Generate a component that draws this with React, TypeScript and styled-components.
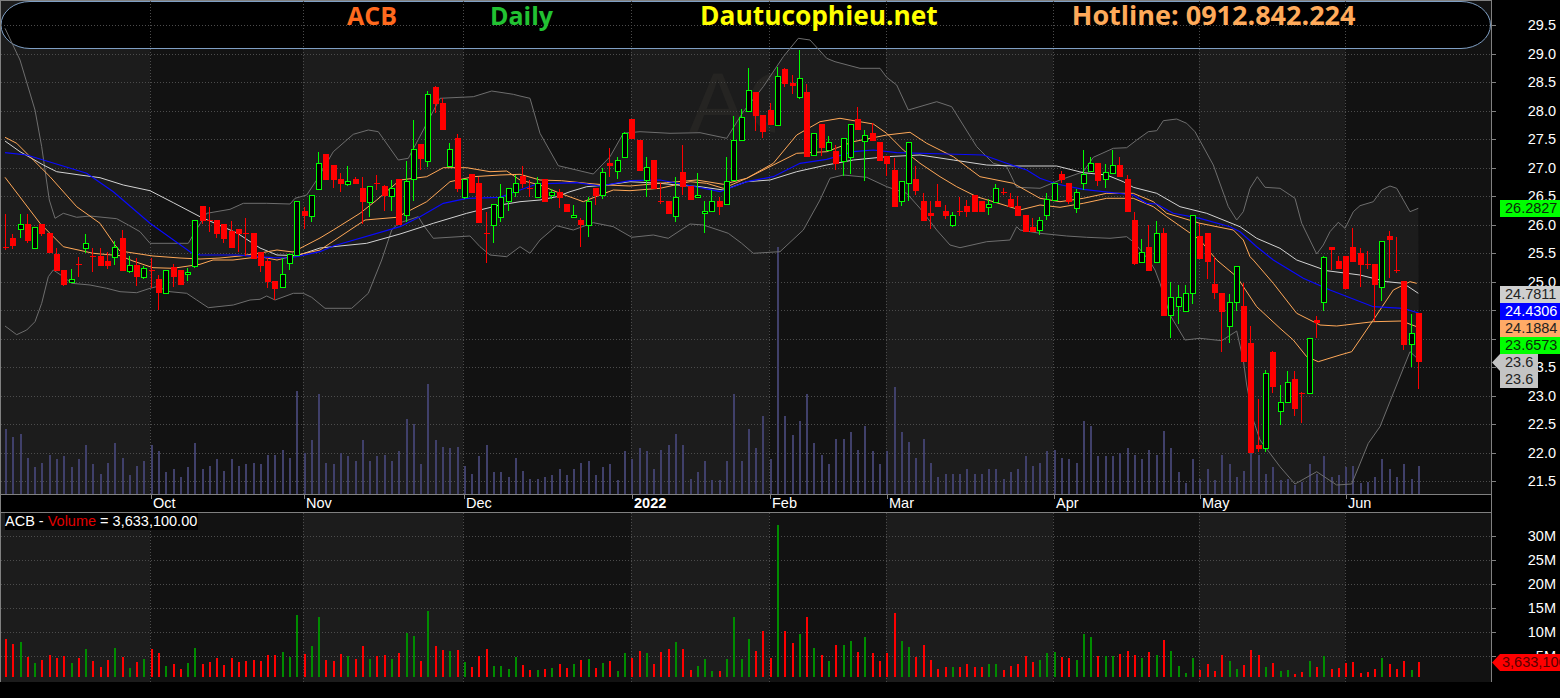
import styled, { createGlobalStyle } from "styled-components";

const GlobalStyle = createGlobalStyle`
    html, body {
        margin: 0;
        background: #000;
    }
`;

const Shell = styled.div`
    position: relative;
    width: 1560px;
    height: 698px;
    background: #000;
    overflow: hidden;
    font-family: "Liberation Sans", Arial, sans-serif;
`;

const PriceRow = styled.div`
    position: relative;
    display: flex;
    height: 494px;
`;

const VolumeRow = styled.div`
    position: relative;
    display: flex;
    height: 169px;
`;

const Plot = styled.div<{ $top?: boolean }>`
    position: relative;
    box-sizing: border-box;
    width: 1492px;
    border-left: 1px solid #808080;
    border-right: 1px solid #808080;
    border-top: ${(props) => (props.$top ? "1px solid #808080" : "0")};
`;

const ChartSvg = styled.svg`
    display: block;
`;

const AxisSvg = styled.svg`
    display: block;
    flex: none;
`;

const AxisText = styled.text`
    font-family: "Liberation Sans", Arial, sans-serif;
    font-size: 14.5px;
    fill: #fff;
`;

const Watermark = styled.text`
    font-family: "Liberation Sans", Arial, sans-serif;
    font-size: 86px;
    fill: #252422;
`;

const Banner = styled.div`
    position: absolute;
    top: 0;
    left: 0;
    display: flex;
    align-items: baseline;
    width: 1480px;
    height: 36px;
    line-height: 28px;
    font-family: "Open Sans", "Noto Sans", sans-serif;
    font-weight: 700;
    white-space: nowrap;
`;

const BannerText = styled.span<{ $color: string; $left: number; $size: number }>`
    flex: none;
    color: ${(props) => props.$color};
    margin-left: ${(props) => props.$left}px;
    font-size: ${(props) => props.$size}px;
`;

const DateStrip = styled.div`
    box-sizing: border-box;
    display: flex;
    width: 1492px;
    height: 19px;
    padding-left: 1px;
    border: 1px solid #808080;
`;

const MonthCell = styled.div<{ $width: number; $bold?: boolean }>`
    position: relative;
    box-sizing: border-box;
    flex: none;
    width: ${(props) => props.$width}px;
    padding-left: 2px;
    color: #fff;
    font-size: 14.5px;
    line-height: 17px;
    font-weight: ${(props) => (props.$bold ? 700 : 400)};

    &::before {
        content: "";
        position: absolute;
        left: 0;
        top: 0;
        width: 1px;
        height: 4px;
        background: #808080;
    }
`;

const SpacerCell = styled.div<{ $width: number }>`
    flex: none;
    width: ${(props) => props.$width}px;
`;

const Legend = styled.div`
    position: absolute;
    top: 0;
    left: 4px;
    padding: 0 1px 0 0;
    height: 17px;
    line-height: 17px;
    background: #000;
    color: #fff;
    font-size: 14.5px;
    white-space: pre;
`;

const LegendAccent = styled.span`
    color: #e00000;
`;

const TagStack = styled.div`
    position: absolute;
    top: 286px;
    left: 1500px;
    display: flex;
    flex-direction: column;
    align-items: flex-start;
`;

const PriceTag = styled.div<{ $bg: string; $fg: string; $narrow?: boolean }>`
    box-sizing: border-box;
    width: ${(props) => (props.$narrow ? 38 : 60)}px;
    height: 17px;
    padding-left: 5px;
    line-height: 17px;
    font-size: 14.5px;
    white-space: nowrap;
    background: ${(props) => props.$bg};
    color: ${(props) => props.$fg};
`;

const PointerTag = styled(PriceTag)`
    width: 46px;
    margin-left: -8px;
    padding-left: 13px;
    clip-path: polygon(0 50%, 8px 0, 100% 0, 100% 100%, 8px 100%);
`;

const CurrentTag = styled(PriceTag)`
    position: absolute;
    top: 200px;
    left: 1500px;
`;

const VolumeTag = styled.div`
    position: absolute;
    top: 141px;
    left: 1492px;
    box-sizing: border-box;
    width: 68px;
    height: 17px;
    padding-left: 10px;
    line-height: 17px;
    font-size: 14.5px;
    white-space: nowrap;
    overflow: hidden;
    background: #ff0000;
    color: #5a0000;
    clip-path: polygon(0 50%, 8px 0, 100% 0, 100% 100%, 8px 100%);
`;

// [high, body top, body bottom, low] in page pixels
const candles: number[][] = [
    [214,247,248,249.5],[234,238,246,249],[214,224,229,238],[214,224,241,243],[227,227,248,249],
    [224,224,234,236],[233,233,253,253],[248,254,271,271],[270,270,285,286],[269,279,282,283],
    [257,264,265,277],[234,243,248,253],[248,256,257,272],[248,256,266,266],[252,261,266,269],
    [241,247,257,265],[230,238,271,271],[256,265,271,273],[258,265,277,286],[266,268,277,279],
    [258,270,271,288],[275,279,293,310],[270,270,293,293],[264,267,277,287],[270,270,285,285],
    [268,272,274,281],[220,220,266,268],[206,206,221,224],[207,220,221,232],[220,220,234,238],
    [224,224,239,243],[221,231,248,248],[229,229,234,252],[218,233,234,256],[233,233,259,259],
    [252,252,266,272],[258,261,282,288],[281,281,289,300],[258,274,287,287],[254,254,263,270],
    [201,201,255,256],[207,211,216,229],[195,195,216,222],[152,163,189,189],[154,154,180,180],
    [165,165,180,188],[173,179,184,192],[166,181,184,186],[177,179,184,184],[177,188,202,224],
    [186,186,202,217],[175,183,184,190],[185,186,196,211],[180,188,196,211],[179,179,225,225],
    [161,181,215,222],[120,149,179,201],[144,144,159,170],[91,94,161,167],[86,87,104,113],
    [98,103,130,130],[143,149,166,166],[134,138,189,192],[179,179,197,199],[174,174,193,193],
    [177,183,223,223],[212,233,234,263],[204,204,225,243],[184,197,217,222],[188,188,201,211],
    [175,183,192,197],[166,176,184,188],[180,188,189,197],[177,183,197,197],[179,179,202,202],
    [189,192,195,199],[189,192,198,208],[204,204,212,212],[205,215,217,217],[218,220,225,247],
    [197,201,225,237],[188,188,196,205],[168,172,195,199],[148,163,166,177],[157,160,171,179],
    [132,133,157,157],[119,119,139,139],[140,140,171,171],[157,167,180,197],[160,160,189,189],
    [183,201,202,204],[201,201,214,214],[177,197,216,222],[145,172,187,195],[186,186,200,200],
    [173,195,197,197],[201,211,213,233],[190,201,211,211],[197,201,207,215],[157,181,204,205],
    [116,140,180,180],[109,117,140,140],[68,90,111,111],[92,92,116,131],[115,115,132,138],
    [103,110,125,125],[67,76,125,125],[68,69,84,87],[75,83,86,94],[50,78,97,99],
    [84,92,157,157],[133,133,155,155],[124,124,148,156],[136,142,150,150],[145,151,164,170],
    [138,138,161,176],[124,124,157,174],[107,119,130,130],[130,135,141,181],[123,133,141,141],
    [142,142,161,161],[156,156,164,176],[158,170,207,207],[181,181,201,206],[142,142,183,201],
    [166,179,191,195],[193,201,221,221],[201,213,216,229],[184,201,207,207],[205,211,216,219],
    [212,215,225,227],[197,211,212,216],[200,206,212,217],[195,195,212,212],[201,201,212,212],
    [199,204,207,215],[184,188,202,202],[188,192,193,195],[193,199,207,207],[196,206,216,216],
    [215,215,232,232],[218,227,232,232],[217,220,230,235],[193,199,215,220],[183,183,200,200],
    [171,174,180,183],[183,183,202,204],[189,192,208,213],[150,174,183,190],[157,163,171,171],
    [163,163,181,186],[164,172,179,188],[150,165,173,173],[157,165,177,177],[175,179,212,212],
    [212,220,264,265],[239,252,262,262],[225,247,271,271],[221,233,262,262],[228,233,316,316],
    [282,297,315,338],[285,297,306,324],[285,293,311,311],[215,215,293,304],[224,236,259,259],
    [233,233,262,279],[257,284,293,299],[293,293,312,352],[294,302,326,343],[266,266,302,311],
    [283,306,362,362],[326,343,453,453],[399,445,449,452],[370,373,448,452],[351,352,387,393],
    [385,402,411,425],[371,382,402,402],[371,379,409,416],[392,393,394,423],[338,338,393,393],
    [316,320,323,338],[256,257,302,311],[247,247,250,270],[256,261,269,269],[256,256,289,289],
    [228,247,262,262],[248,253,265,287],[251,264,265,269],[264,264,285,321],[241,241,287,301],
    [231,236,240,278],[237,270,271,273],[281,281,345,350],[314,333,344,367],[313,313,362,389],
];

// r = down day, g = up day, five days to a group
const sides = [
    "rrgrg rrrrg rgrrr grgrg rrgrr ggrrr rrrrr rrrgg grggr rrgrr grrgr ggrgr rgrgr rrggg g",
    "rrgrg rrgrg rgrgg rrgrr rgrrg ggrgg ggrrr grrgr grgrg grgrr rrggr rrrrg rrrrg grrrr rg",
    "ggrrg ggrgg rrrgr grggg grrrr ggrrr grggr rgrgr rrrrr rgrrr gr",
]
    .join("")
    .replace(/ /g, "");

const volumeHeights = [
    38,33,35,20,14,17,22,19,21,14,19,28,16,10,17,29,20,9,15,18,28,24,11,13,8,14,29,13,15,19,12,19,15,16,17,16,22,22,25,20,62,23,31,60,17,16,23,21,18,31,18,21,22,18,24,44,41,16,66,31,27,26,27,15,10,21,28,11,11,8,20,
    12,7,7,8,9,13,9,13,17,18,9,14,16,6,24,19,26,24,13,25,28,35,28,7,11,18,6,6,18,60,18,38,26,46,19,152,46,34,43,60,29,22,16,32,32,36,25,40,24,16,24,64,36,30,20,32,17,8,10,10,10,13,10,10,13,13,7,11,13,21,15,17,
    24,25,20,19,17,43,40,21,21,21,23,26,22,19,25,22,37,26,11,4,19,7,13,6,22,16,8,12,27,22,10,14,6,7,3,5,16,10,21,8,9,14,15,4,5,8,19,13,8,16,7,15,
];

const barX = (i: number) => Math.round(6 + 7.283 * i);

// reads a line given in 3x crop coordinates of one region of the chart
const crop = (ox: number, oy: number, flat: number[]) => {
    const out: [number, number][] = [];
    for (let i = 0; i < flat.length; i += 2) out.push([ox + flat[i] / 3, oy + flat[i + 1] / 3]);
    return out;
};

const upper = [
    ...crop(0, 0, [15,85,60,180,105,330,125,440,148,600,165,655,190,640,230,652,270,648,350,656,385,675,420,695,450,730,565,730,585,695,620,640,690,628,730,610,800,610,870,612,885,595,920,585,950,540,1000,455,1060,403,1105,390,1135,395,1195,480,1225,475,1270,390,1320,295,1420,290,1475,273,1540,283]),
    ...crop(520, 0, [0,288,30,295,60,400,115,497,220,522,270,470,310,400,360,395,450,400,540,398,620,415,670,335,730,260,790,170,835,115,870,120,920,175,945,185,1020,205,1080,205,1100,232,1130,255,1165,330,1250,305,1295,320,1370,440,1420,490,1460,500,1490,562]),
    ...crop(1040, 0, [0,565,60,540,130,515,160,472,220,445,260,443,290,420,325,395,350,392,370,362,410,357,440,370,465,395,520,495,565,620,590,660,610,635,630,565,652,530,675,562,720,565,765,595,785,670,830,762,850,735,870,695,895,667,915,685,940,635,960,617,1000,605,1025,570,1050,558,1070,565,1110,635,1135,625]),
];

const lower = [
    ...crop(0, 260, [15,198,50,224,80,210,105,185,125,130,145,50,160,30,190,50,215,70,270,75,320,85,360,95,410,98,450,85,470,80,510,95,560,100,590,120,625,143,700,135,750,120,780,118,800,108,825,120,880,100,910,100,935,112,975,145,1055,145,1105,100,1145,0]),
    ...crop(0, 0, [1175,690,1195,670,1255,650,1270,675,1300,715,1410,708,1440,740,1470,765,1520,770]),
    ...crop(520, 0, [0,740,30,760,60,720,110,677,160,690,220,668,280,680,335,712,400,705,445,715,510,672,550,675,625,700,665,730,700,760,780,755,850,690,900,600,930,535,970,525,1040,532,1100,560,1160,580,1200,625,1250,690,1290,735,1320,743,1400,725,1470,720,1490,680,1500,690]),
    ...crop(1040, 0, [0,700,80,708,140,712,210,715,260,710,285,730]),
    ...crop(1040, 260, [330,5,345,30,360,70,390,165,435,240,480,235,545,242,590,213,610,300,620,375,640,480,660,540,720,620,765,672,830,635,890,675,935,672,985,550,1020,500,1060,400,1110,275,1137,300]),
];

const whiteLine = [
    ...crop(0, 0, [15,423,60,455,130,495,170,515,240,525,300,533,370,555,450,572,520,608,600,650,711,699,780,744,831,765,891,767,960,744,1100,730,1200,702,1300,670,1400,640,1500,615]),
    ...crop(520, 0, [0,605,60,600,110,590,150,575,200,560,260,555,330,545,420,550,470,555,540,560,610,570,680,545,750,540,830,515,920,495,1000,480,1100,470,1200,465,1300,480,1400,495,1480,498]),
    ...crop(1040, 0, [0,498,50,498,130,518,200,525,250,545,280,562,350,580,420,620,500,640,600,680,650,715,720,745,770,780]),
    ...crop(1040, 260, [860,32,960,45,1040,65,1090,70,1135,100]),
];

const blueLine = [
    ...crop(0, 0, [15,458,80,465,130,480,260,520,340,575,450,670,575,759,600,765,711,765,819,773,870,774,960,755,1000,738,1200,680,1260,650,1330,610,1400,595,1500,592]),
    ...crop(520, 0, [0,570,50,552,100,550,170,548,240,558,330,542,420,540,500,555,600,575,680,545,760,530,840,490,920,478,1000,455,1060,450,1130,458,1280,462,1390,465,1460,490,1520,510]),
    ...crop(1040, 0, [0,535,50,552,130,568,280,585,320,610,350,612,400,640,480,655,570,680,600,695,650,740,700,780]),
    ...crop(1040, 260, [790,55,870,90,1000,140,1090,145,1137,160]),
];

const orangeA = [
    ...crop(0, 0, [15,412,50,430,100,480,150,530,230,620,300,670,345,735,360,753,459,768,540,774,600,777,660,774,720,768,780,759,831,750,879,756,960,714,1000,690,1080,640,1130,600,1200,540,1280,530,1330,503,1400,503,1470,515,1520,513]),
    ...crop(520, 0, [0,540,60,555,120,580,190,605,240,585,280,570,330,572,420,565,510,545,560,550,610,565,680,535,760,490,830,405,900,365,960,355,1060,372,1100,400,1150,450,1200,490,1260,530,1310,560,1370,590,1420,605,1500,630]),
    ...crop(1040, 0, [0,615,60,622,130,610,200,595,280,595,340,620,380,650,480,720,530,780]),
    ...crop(1040, 260, [590,50,650,140,720,205,760,240,800,290,835,305,900,285,935,275,1000,180,1060,90,1110,65,1130,70]),
];

const orangeB = [
    ...crop(0, 0, [15,532,120,670,190,740,280,760,360,767,399,783,459,803,519,805,600,793,639,780,699,780,780,770,831,780,891,765,960,750,1095,660,1190,652,1280,605,1350,545,1420,530,1500,525]),
    ...crop(520, 0, [0,523,60,540,125,542,200,550,260,555,330,558,440,548,530,540,610,553,680,535,760,495,830,460,920,455,1000,425,1100,405,1170,397,1220,430,1300,470,1380,530,1480,550]),
    ...crop(1040, 0, [0,595,60,605,130,595,200,580,280,580,340,605,380,640,480,670,580,690,610,720,630,770]),
    ...crop(1040, 260, [640,0,700,70,770,160,840,195,890,198,1000,185,1085,183,1130,200]),
];

const toPoints = (line: [number, number][]) => line.map(([x, y]) => `${x.toFixed(1)},${y.toFixed(1)}`).join(" ");

const monthLines = [150, 303, 463, 631, 769, 886, 1053, 1199, 1345];

// dark months alternate with the lighter plot background
const darkMonths = [
    [150, 303],
    [463, 631],
    [769, 886],
    [1053, 1199],
    [1345, 1491],
];

const priceTicks = ["29.5","29.0","28.5","28.0","27.5","27.0","26.5","26.0","25.5","25.0","24.5","24.0","23.5","23.0","22.5","22.0","21.5"];
const priceY = (i: number) => Math.round(25 + i * 28.5);

const volumeTicks = [
    { label: "30M", y: 536 },
    { label: "25M", y: 560 },
    { label: "20M", y: 584 },
    { label: "15M", y: 608 },
    { label: "10M", y: 632 },
    { label: "5M", y: 656 },
];

const months = [
    { label: "Oct", width: 153 },
    { label: "Nov", width: 160 },
    { label: "Dec", width: 168 },
    { label: "2022", width: 138, bold: true },
    { label: "Feb", width: 117 },
    { label: "Mar", width: 167 },
    { label: "Apr", width: 146 },
    { label: "May", width: 146 },
    { label: "Jun", width: 140 },
];

const Grid = ({ top, bottom, rows }: { top: number; bottom: number; rows: number[] }) => (
    <g stroke="#4c4c4c" strokeDasharray="1 2" shapeRendering="crispEdges">
        {rows.map((y) => (
            <line key={y} x1={1} x2={1491} y1={y + 0.5} y2={y + 0.5} />
        ))}
        {monthLines.map((x) => (
            <line
                key={x}
                x1={x + 0.5}
                x2={x + 0.5}
                y1={top}
                y2={bottom}
                strokeDasharray={x === 631 ? undefined : "1 2"}
            />
        ))}
    </g>
);

const Candle = ({ i }: { i: number }) => {
    const [hi, top, bot, lo] = candles[i];
    const x = barX(i);
    const up = sides[i] === "g";
    const color = up ? "#00ff00" : "#ff0000";
    return (
        <g>
            <rect x={x - 1} y={hi} width={1} height={lo - hi} fill={color} />
            {up ? (
                <rect x={x - 2.5} y={top + 0.5} width={5} height={bot - top} fill="#000" stroke={color} />
            ) : (
                <rect x={x - 3} y={top} width={6} height={bot - top} fill={color} />
            )}
        </g>
    );
};

function PricePane() {
    return (
        <ChartSvg width={1490} height={493} viewBox="1 1 1490 493">
            <rect x={1} y={1} width={1490} height={493} fill="#1c1c1c" />
            {darkMonths.map(([a, b]) => (
                <rect key={a} x={a} y={1} width={b - a} height={493} fill="#121212" />
            ))}
            <polygon points={toPoints([...upper, ...[...lower].reverse()])} fill="#1c1c1c" />
            <path
                d="M30 1.5 H1461 A29.5 23.5 0 0 1 1461 48.5 H30 A29 23.5 0 0 1 30 1.5 Z"
                fill="#000"
                stroke="#7f9fc4"
            />
            <clipPath id="mark">
                <rect x={680} y={60} width={95} height={80} />
            </clipPath>
            <Watermark x={689} y={132} clipPath="url(#mark)">
                AC
            </Watermark>
            <Grid top={1} bottom={494} rows={priceTicks.map((_, i) => priceY(i))} />
            <g shapeRendering="crispEdges" fill="#40406a">
                {volumeHeights.map((h, i) => (
                    <rect key={i} x={barX(i) - 1} y={494 - (1.6 * h + 4.3)} width={2} height={1.6 * h + 4.3} />
                ))}
            </g>
            <g fill="none">
                <polyline points={toPoints(upper)} stroke="#6e6e6e" />
                <polyline points={toPoints(lower)} stroke="#6e6e6e" />
                <polyline points={toPoints(whiteLine)} stroke="#d2d2d2" />
                <polyline points={toPoints(orangeA)} stroke="#ffa858" />
                <polyline points={toPoints(orangeB)} stroke="#ffa858" />
                <polyline points={toPoints(blueLine)} stroke="#0a0aff" strokeWidth={1.2} />
            </g>
            <g shapeRendering="crispEdges">
                {candles.map((_, i) => (
                    <Candle key={i} i={i} />
                ))}
            </g>
        </ChartSvg>
    );
}

function VolumePane() {
    return (
        <ChartSvg width={1490} height={169} viewBox="1 513 1490 169">
            <rect x={1} y={513} width={1490} height={169} fill="#1c1c1c" />
            {darkMonths.map(([a, b]) => (
                <rect key={a} x={a} y={513} width={b - a} height={169} fill="#121212" />
            ))}
            <Grid top={513} bottom={682} rows={volumeTicks.map((t) => t.y)} />
            <g shapeRendering="crispEdges">
                {volumeHeights.map((h, i) => (
                    <rect
                        key={i}
                        x={barX(i) - 1}
                        y={677 - h}
                        width={2}
                        height={h}
                        fill={sides[i] === "g" ? "#008c00" : "#ff0000"}
                    />
                ))}
            </g>
        </ChartSvg>
    );
}

function App() {
    return (
        <Shell>
            <GlobalStyle />
            <PriceRow>
                <Plot $top>
                    <PricePane />
                    <Banner>
                        <BannerText $color="#ff6a1e" $left={346} $size={25}>ACB</BannerText>
                        <BannerText $color="#22c232" $left={93} $size={25}>Daily</BannerText>
                        <BannerText $color="#ffff00" $left={147} $size={26.3}>Dautucophieu.net</BannerText>
                        <BannerText $color="#ffaa5a" $left={134} $size={27}>Hotline: 0912.842.224</BannerText>
                    </Banner>
                </Plot>
                <AxisSvg width={68} height={494}>
                    {priceTicks.map((label, i) => (
                        <g key={label}>
                            <rect x={0} y={priceY(i)} width={4} height={1} fill="#808080" />
                            <AxisText x={64} y={priceY(i) + 5} textAnchor="end">
                                {label}
                            </AxisText>
                        </g>
                    ))}
                </AxisSvg>
                <CurrentTag $bg="#00ff00" $fg="#0a2a0a">26.2827</CurrentTag>
                <TagStack>
                    <PriceTag $bg="#cfcfcf" $fg="#222">24.7811</PriceTag>
                    <PriceTag $bg="#0000ff" $fg="#fff">24.4306</PriceTag>
                    <PriceTag $bg="#ffaa66" $fg="#222">24.1884</PriceTag>
                    <PriceTag $bg="#00ff00" $fg="#0a2a0a">23.6573</PriceTag>
                    <PointerTag $bg="#c4c4c4" $fg="#222">23.6</PointerTag>
                    <PriceTag $bg="#c4c4c4" $fg="#222" $narrow>23.6</PriceTag>
                </TagStack>
            </PriceRow>
            <DateStrip>
                <SpacerCell $width={149} />
                {months.map((m) => (
                    <MonthCell key={m.label} $width={m.width} $bold={m.bold}>
                        {m.label}
                    </MonthCell>
                ))}
            </DateStrip>
            <VolumeRow>
                <Plot>
                    <VolumePane />
                    <Legend>
                        ACB - <LegendAccent>Volume</LegendAccent> = 3,633,100.00
                    </Legend>
                </Plot>
                <AxisSvg width={68} height={169} viewBox="1492 513 68 169">
                    {volumeTicks.map((t) => (
                        <g key={t.label}>
                            <rect x={1492} y={t.y} width={4} height={1} fill="#808080" />
                            <AxisText x={1556} y={t.y + 5} textAnchor="end">
                                {t.label}
                            </AxisText>
                        </g>
                    ))}
                </AxisSvg>
                <VolumeTag>3,633,100.00</VolumeTag>
            </VolumeRow>
        </Shell>
    );
}

export default App;
